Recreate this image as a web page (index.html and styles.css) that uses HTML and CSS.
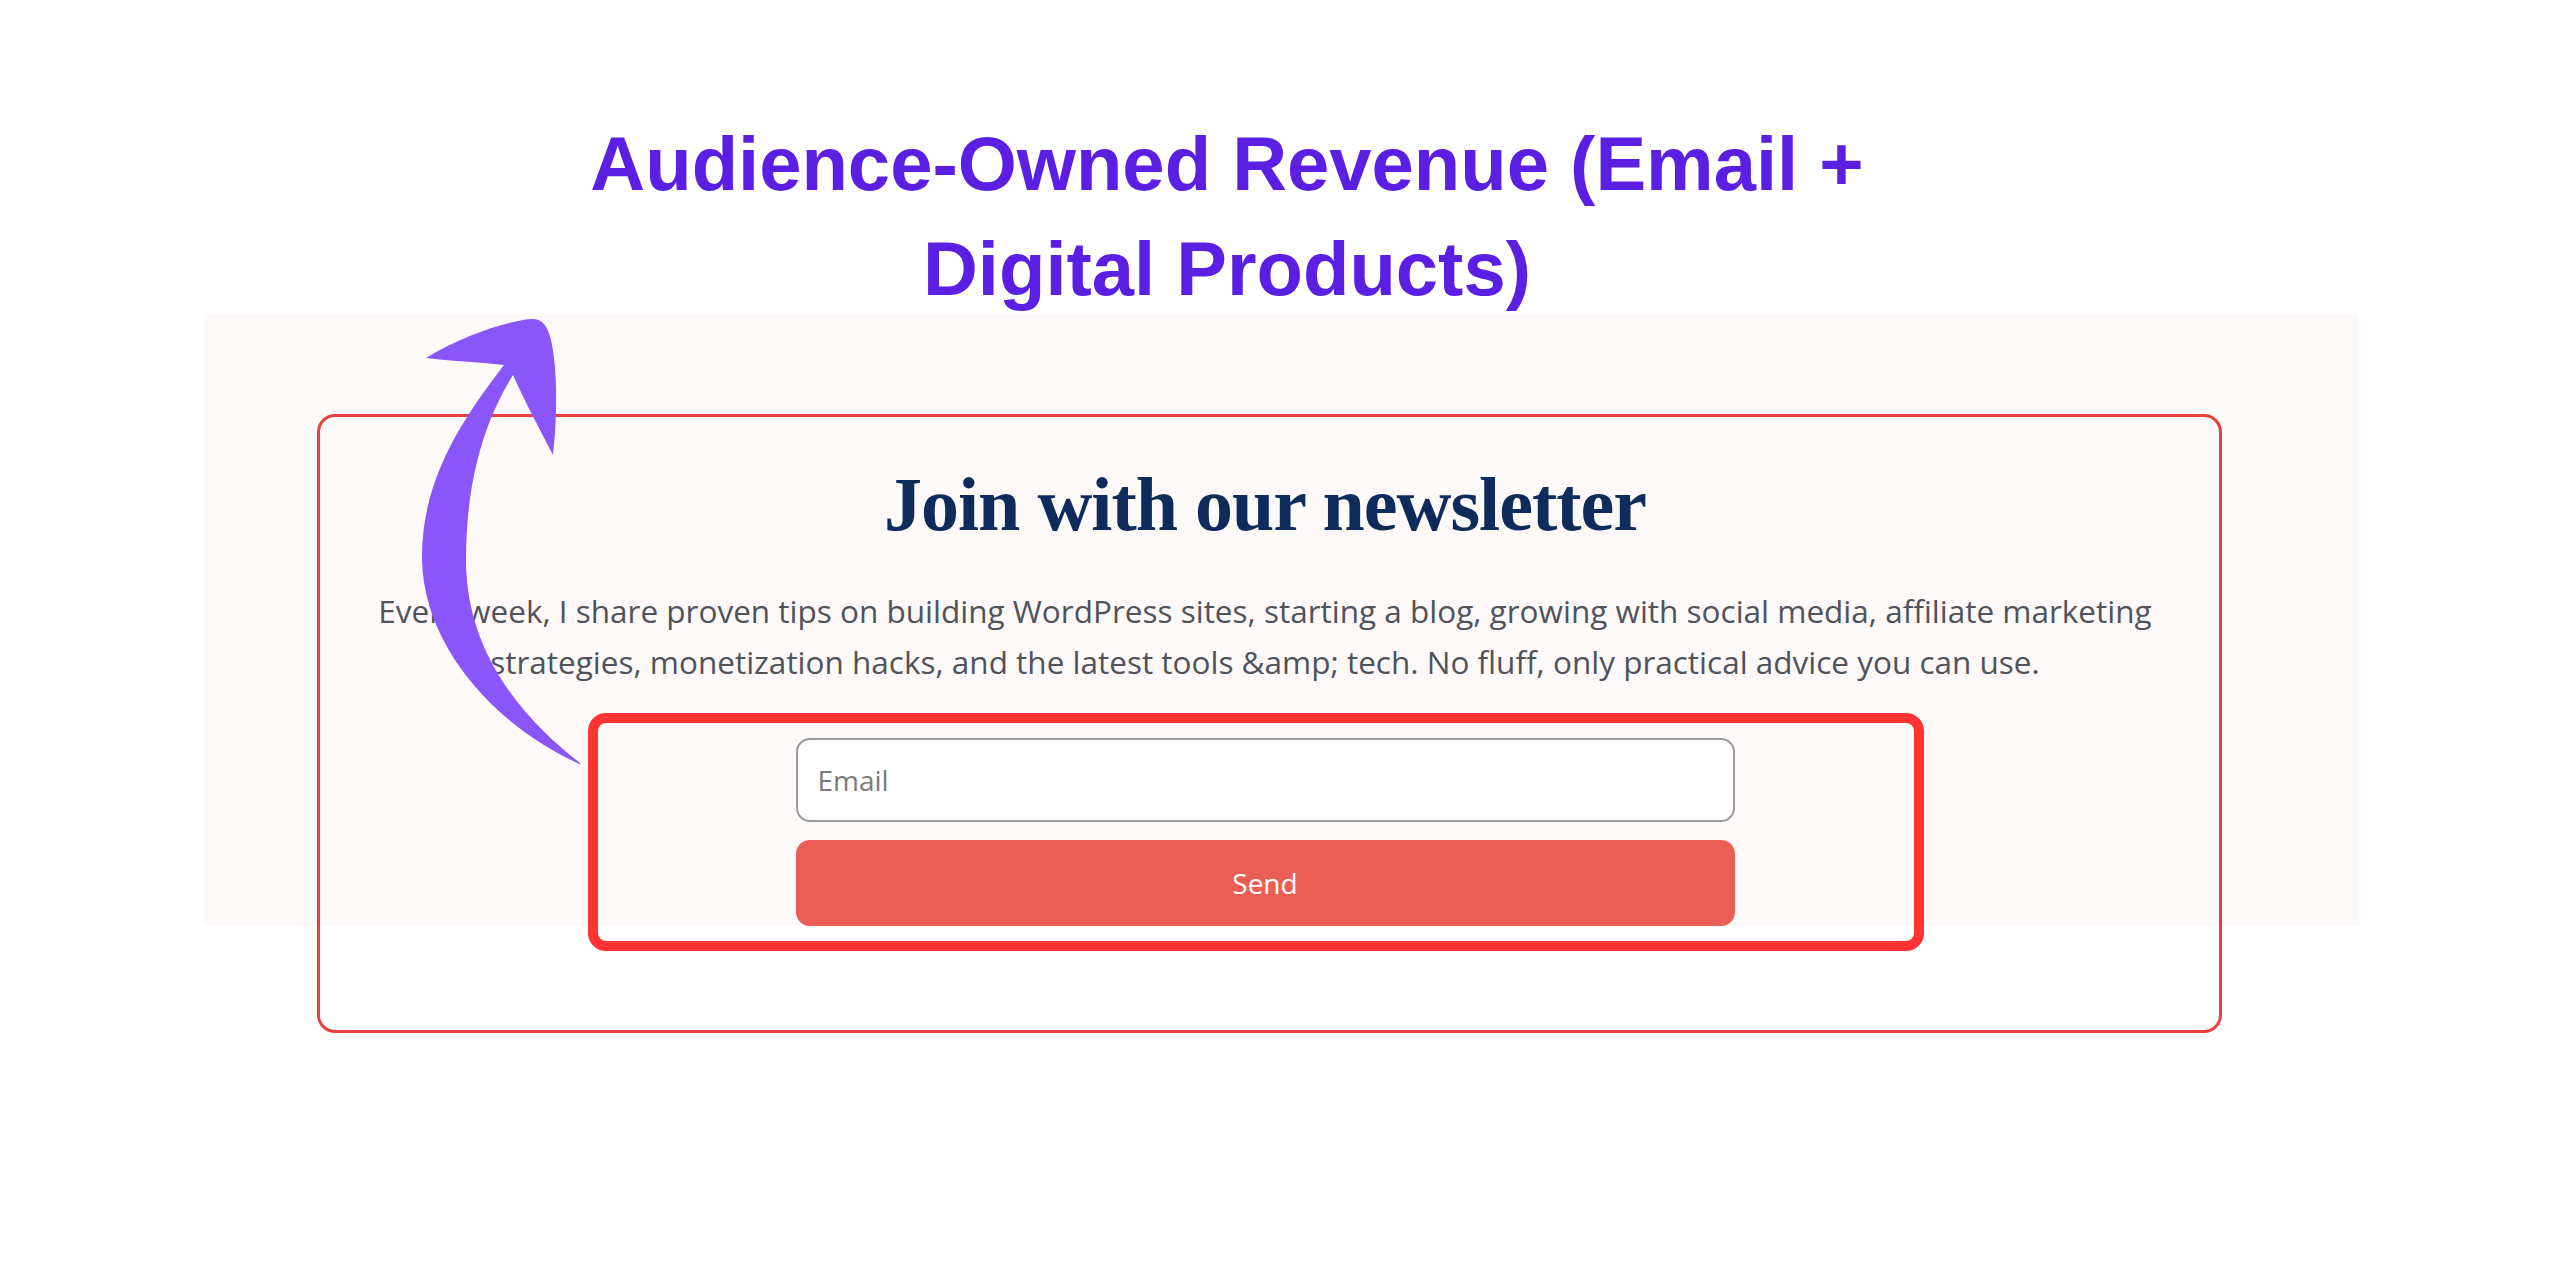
FILE: index.html
```html
<!DOCTYPE html>
<html lang="en">
<head>
  <meta charset="UTF-8" />
  <meta name="viewport" content="width=device-width, initial-scale=1.0" />
  <title>Audience-Owned Revenue</title>
  <link rel="stylesheet" href="styles.css">
</head>
<body>
  <div class="page">
    <h2 class="headline">Audience-Owned Revenue (Email +<br />Digital Products)</h2>

    <section class="shot">
      <div class="signup">
        <h3 class="signup-title">Join with our newsletter</h3>
        <p class="signup-text">Every week, I share proven tips on building WordPress sites, starting a blog, growing with social media, affiliate marketing strategies, monetization hacks, and the latest tools &amp;amp; tech. No fluff, only practical advice you can use.</p>
        <form class="signup-form" onsubmit="return false">
          <input class="field" type="email" placeholder="Email" />
          <button class="send" type="submit">Send</button>
        </form>
      </div>
    </section>

    <!-- highlight boxes + arrow drawn on top -->
    <div class="mark-outer"></div>
    <div class="mark-form"></div>
    <svg class="arrow" viewBox="400 300 180 480" width="180" height="480">
      <path d="M533 319
               C518 319 468 332 426 358
               C450 361 478 362 504 365
               C462 420 421 480 422 560
               C424 650 500 730 584 766
               C520 718 466 650 466 560
               C466 470 490 412 513 375
               C524 400 540 430 553 455
               C557 420 558 370 551 340
               C547 324 541 319 533 319 Z" />
    </svg>
  </div>
</body>
</html>
```

FILE: styles.css
```css
:root {
  --purple: #5b1fe4;
  --arrow: #8a55f9;
  --navy: #0e2c5b;
  --text: #50535a;
  --panel: #fdf9f8;
  --coral: #eb5e55;
  --red-line: #e6403f;
  --red-mark: #ff3333;
}

body {
  margin: 0;
  background: #fff;
  font-family: "Open Sans", sans-serif;
}

.page {
  position: relative;
  width: 2560px;
  height: 1280px;
  overflow: hidden;
}

.headline {
  margin: 0 0 -8px;
  padding: 111px 106px 0 0;
  text-align: center;
  font-family: "Liberation Sans", Arial, sans-serif;
  font-weight: 700;
  font-size: 76px;
  line-height: 105px;
  color: var(--purple);
}

.shot {
  margin-left: 204px;
  width: 2155px;
  padding: 146px 33px 0 0;
  box-sizing: border-box;
  background: var(--panel);
}

.signup {
  display: flex;
  flex-direction: column;
  align-items: center;
  text-align: center;
}

.signup-title {
  margin: 0;
  font-family: "Liberation Serif", "Times New Roman", serif;
  font-weight: 700;
  font-size: 76px;
  line-height: 91px;
  letter-spacing: -1px;
  color: var(--navy);
}

.signup-text {
  margin: 35px 0 0;
  max-width: 1820px;
  font-size: 31.5px;
  line-height: 51px;
  color: var(--text);
}

.signup-form {
  margin-top: 51px;
  width: 939px;
  display: flex;
  flex-direction: column;
  gap: 18px;
}

.field {
  height: 84px;
  padding: 0 20px;
  box-sizing: border-box;
  border: 2px solid #9b9b9b;
  border-radius: 14px;
  background: #fff;
  font-family: "Open Sans", sans-serif;
  font-size: 28px;
  color: #444;
}

.field::placeholder {
  color: #7a7a7a;
}

.send {
  height: 86px;
  border: none;
  border-radius: 14px;
  background: var(--coral);
  color: #fff;
  font-family: "Open Sans", sans-serif;
  font-size: 28px;
  cursor: pointer;
}

.mark-outer {
  position: absolute;
  left: 317px;
  top: 414px;
  width: 1905px;
  height: 619px;
  box-sizing: border-box;
  border: 3px solid var(--red-line);
  border-radius: 18px;
}

.mark-form {
  position: absolute;
  left: 588px;
  top: 713px;
  width: 1336px;
  height: 238px;
  box-sizing: border-box;
  border: 10px solid var(--red-mark);
  border-radius: 18px;
}

.arrow {
  position: absolute;
  left: 400px;
  top: 300px;
  fill: var(--arrow);
}
```
